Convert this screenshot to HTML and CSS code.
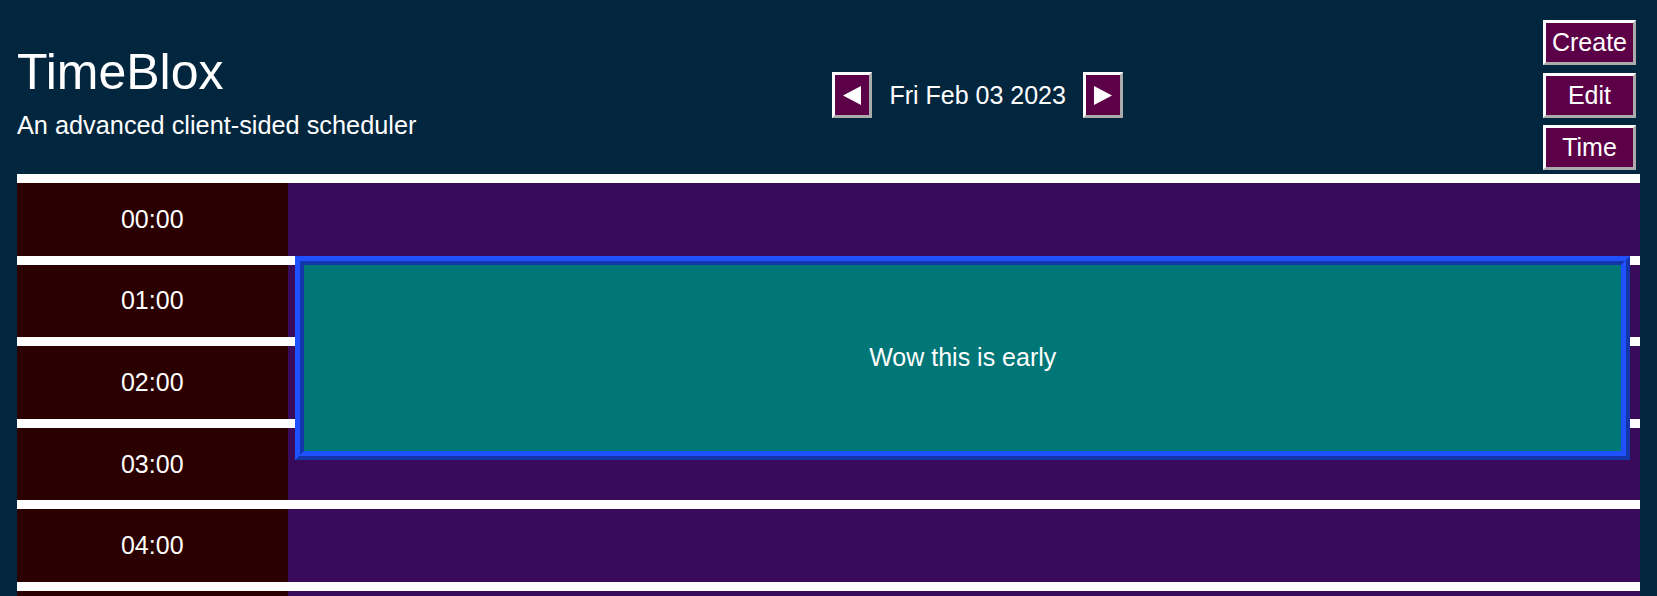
FILE: index.html
```html
<!DOCTYPE html>
<html lang="en">
<head>
<meta charset="utf-8">
<title>TimeBlox</title>
<link rel="stylesheet" href="styles.css">
</head>
<body>
<div class="page">
  <header class="header">
    <div class="brand">
      <h1 class="brand-title">TimeBlox</h1>
      <p class="brand-sub">An advanced client-sided scheduler</p>
    </div>
    <nav class="day-nav">
      <button class="arrow-btn" aria-label="Previous day">
        <svg width="18" height="19" viewBox="0 0 18 19"><polygon points="18,0 18,19 0,9.5" fill="#fff"/></svg>
      </button>
      <span class="day-label">Fri Feb 03 2023</span>
      <button class="arrow-btn" aria-label="Next day">
        <svg width="18" height="19" viewBox="0 0 18 19"><polygon points="0,0 0,19 18,9.5" fill="#fff"/></svg>
      </button>
    </nav>
    <div class="actions">
      <button class="action-btn">Create</button>
      <button class="action-btn">Edit</button>
      <button class="action-btn">Time</button>
    </div>
  </header>

  <main class="schedule">
    <div class="row"><div class="time">00:00</div><div class="slot"></div></div>
    <div class="row"><div class="time">01:00</div><div class="slot"></div></div>
    <div class="row"><div class="time">02:00</div><div class="slot"></div></div>
    <div class="row"><div class="time">03:00</div><div class="slot"></div></div>
    <div class="row"><div class="time">04:00</div><div class="slot"></div></div>
    <div class="row"><div class="time">05:00</div><div class="slot"></div></div>
    <div class="event" style="top: 81.6px; height: 204px;">Wow this is early</div>
  </main>
</div>
</body>
</html>
```

FILE: styles.css
```css
html, body {
  margin: 0;
  padding: 0;
  background: #03263f;
  font-family: "Liberation Sans", Arial, sans-serif;
  color: #ffffff;
  overflow: hidden;
}

.page {
  padding: 0 17px;
}

.header {
  display: flex;
  justify-content: space-between;
  align-items: center;
  padding: 20px 0 4px;
}

.brand {
  margin-bottom: 6px;
}

.brand-title {
  margin: 0;
  font-size: 50px;
  font-weight: normal;
  line-height: 57.5px;
}

.brand-sub {
  margin: 9px 0 0;
  font-size: 25.3px;
  line-height: 28.75px;
}

.day-nav {
  display: flex;
  align-items: center;
  gap: 17px;
  margin-right: 4px;
}

.arrow-btn {
  box-sizing: border-box;
  width: 40px;
  height: 46px;
  padding: 0;
  margin: 0;
  background: #5c0047;
  border: 3px outset #ffffff;
  display: flex;
  align-items: center;
  justify-content: center;
}

.day-label {
  font-size: 25px;
  line-height: 29px;
}

.actions {
  display: flex;
  flex-direction: column;
  gap: 7.5px;
  padding-right: 4px;
}

.action-btn {
  box-sizing: border-box;
  width: 93px;
  height: 45px;
  padding: 0;
  margin: 0;
  background: #5c0047;
  border: 3px outset #ffffff;
  color: #ffffff;
  font-family: "Liberation Sans", Arial, sans-serif;
  font-size: 25px;
  line-height: 29px;
}

.schedule {
  position: relative;
}

.row {
  display: grid;
  grid-template-columns: 1fr 5fr;
  border-top: 9px solid #ffffff;
  height: 72.6px;
}

.time {
  background: #2a0000;
  display: flex;
  align-items: center;
  justify-content: center;
  font-size: 25px;
}

.slot {
  background: #3a0b5a;
}

.event {
  position: absolute;
  left: calc(100% / 6 + 8px);
  right: 10px;
  box-sizing: border-box;
  background: #007676;
  border: 9px ridge #1f51ff;
  display: flex;
  align-items: center;
  justify-content: center;
  font-size: 25px;
}
```
